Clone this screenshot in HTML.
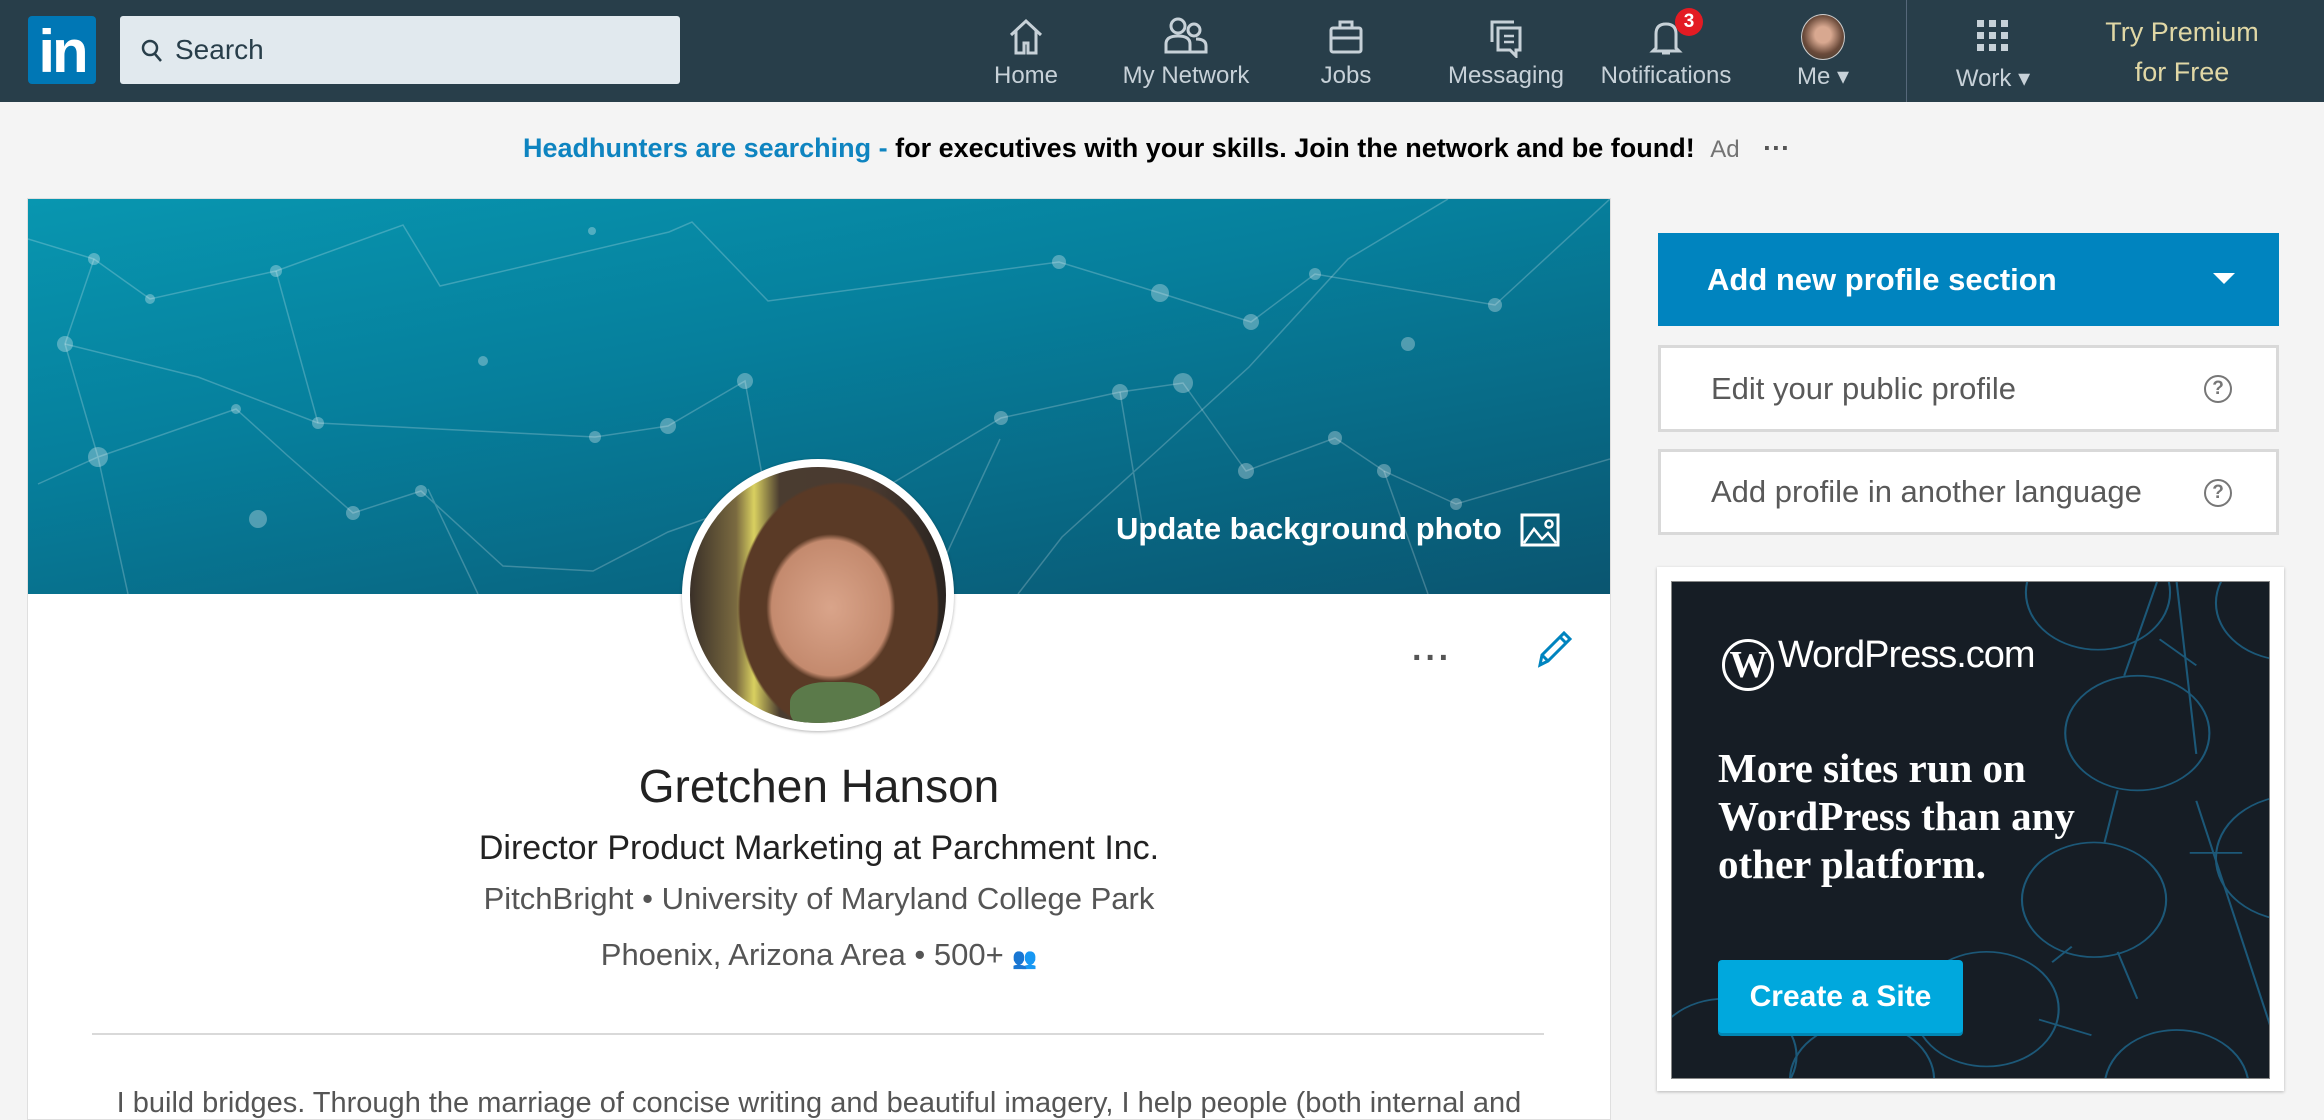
<!DOCTYPE html>
<html><head><meta charset="utf-8"><style>
*{margin:0;padding:0;box-sizing:border-box}
body{width:2324px;height:1104px;overflow:hidden;background:#f4f4f4;font-family:"Liberation Sans",sans-serif;position:relative}
.nav{position:absolute;left:0;top:0;width:2324px;height:102px;background:#283e4a}
.logo{position:absolute;left:28px;top:16px;width:68px;height:68px;background:#0077b5;border-radius:4px;color:#fff;font-weight:bold;font-size:60px;line-height:72px;text-align:center;letter-spacing:-3px}
.search{position:absolute;left:120px;top:16px;width:560px;height:68px;background:#e1e9ee;border-radius:3px;color:#283e4a;font-size:28px;line-height:68px;padding-left:55px}
.item{position:absolute;top:0;height:102px;color:#c7d1d8;font-size:24px;text-align:center;transform:translateX(-50%);white-space:nowrap}
.item svg{position:absolute;left:50%;top:16px;transform:translateX(-50%)}
.item span{position:absolute;left:50%;top:62px;transform:translateX(-50%)}
.abs{position:absolute}
.card{position:absolute;left:28px;top:199px;width:1582px;height:920px;background:#fff;box-shadow:0 0 0 1px #dfdfdf}
.ban{position:absolute;left:0;top:0;width:1582px;height:395px;background:linear-gradient(170deg,#0896b0 0%,#067f9c 40%,#0a5570 100%);overflow:hidden}
.c{position:absolute;left:0;width:1582px;text-align:center}
.rbox{position:absolute;left:1658px;width:621px;background:#fff;border:3px solid #d9d9d9;color:#595959;font-size:31px;padding-left:50px}
</style></head><body>
<div class="nav">
 <div class="logo">in</div>
 <div class="search"><svg class="abs" style="left:20px;top:22px" width="24" height="26" viewBox="0 0 24 26"><circle cx="10" cy="10" r="7" fill="none" stroke="#283e4a" stroke-width="2.5"/><path d="M15 16l6 7" stroke="#283e4a" stroke-width="2.5"/></svg>Search</div>
 <div class="item" style="left:1026px;width:100px"><svg width="40" height="42" viewBox="0 0 40 42"><path d="M5 19L20 5l15 14M10 15v22h8V27h4v10h8V15" fill="none" stroke="#c7d1d8" stroke-width="3"/></svg><span>Home</span></div>
 <div class="item" style="left:1186px;width:140px"><svg width="46" height="40" viewBox="0 0 46 40"><circle cx="15" cy="10" r="7" fill="none" stroke="#c7d1d8" stroke-width="3"/><circle cx="31" cy="14" r="6" fill="none" stroke="#c7d1d8" stroke-width="3"/><path d="M3 36v-8q0-8 12-8 12 0 12 8v8zM27 36h16v-6q0-7-10-7" fill="none" stroke="#c7d1d8" stroke-width="3"/></svg><span>My Network</span></div>
 <div class="item" style="left:1346px;width:80px"><svg width="40" height="40" viewBox="0 0 40 40"><rect x="5" y="12" width="30" height="24" rx="2" fill="none" stroke="#c7d1d8" stroke-width="3"/><path d="M14 12V6h12v6M5 22h30" fill="none" stroke="#c7d1d8" stroke-width="3"/></svg><span>Jobs</span></div>
 <div class="item" style="left:1506px;width:120px"><svg width="40" height="42" viewBox="0 0 40 42"><path d="M6 26V6h22" fill="none" stroke="#c7d1d8" stroke-width="3"/><path d="M12 12h22v22h-4v6l-6-6H12z" fill="none" stroke="#c7d1d8" stroke-width="3"/><path d="M18 20h10M18 26h10" stroke="#c7d1d8" stroke-width="2.5"/></svg><span>Messaging</span></div>
 <div class="item" style="left:1666px;width:150px"><svg width="40" height="42" viewBox="0 0 40 42"><path d="M10 32V18q0-10 10-10t10 10v14l3 3H7zM16 37h8" fill="none" stroke="#c7d1d8" stroke-width="3"/></svg><div class="abs" style="left:84px;top:8px;width:28px;height:28px;border-radius:50%;background:#e31b23;color:#fff;font-weight:bold;font-size:19px;line-height:28px">3</div><span>Notifications</span></div>
 <div class="item" style="left:1823px;width:80px"><div class="abs" style="left:18px;top:14px;width:44px;height:46px;border-radius:50%;background:radial-gradient(circle at 50% 45%,#d8a890 25%,#6a4a3a 60%,#3a3a30);border:1px solid #ccc"></div><span>Me ▾</span></div>
 <div class="abs" style="left:1906px;top:0;width:1px;height:102px;background:#56687a"></div>
 <div class="item" style="left:1993px;width:90px"><svg width="36" height="38" viewBox="0 0 36 38"><g fill="#c7d1d8"><rect x="2" y="4" width="7" height="7"/><rect x="14" y="4" width="7" height="7"/><rect x="26" y="4" width="7" height="7"/><rect x="2" y="16" width="7" height="7"/><rect x="14" y="16" width="7" height="7"/><rect x="26" y="16" width="7" height="7"/><rect x="2" y="28" width="7" height="7"/><rect x="14" y="28" width="7" height="7"/><rect x="26" y="28" width="7" height="7"/></g></svg><span style="top:64px">Work ▾</span></div>
 <div class="abs" style="left:2182px;top:12px;transform:translateX(-50%);color:#e0d7a5;font-size:27px;line-height:40px;text-align:center;white-space:nowrap">Try Premium<br>for Free</div>
</div>
<div class="abs" style="left:523px;top:133px;font-size:27px;font-weight:bold;white-space:nowrap;color:#000"><span style="color:#0e84c0">Headhunters are searching -</span> for executives with your skills. Join the network and be found! <span style="font-weight:normal;color:#737373;font-size:24px;margin-left:8px">Ad</span> <span style="font-weight:bold;color:#555;margin-left:16px">···</span></div>

<div class="card">
 <div class="ban"><svg width="1582" height="395" style="position:absolute;left:0;top:0"><g stroke="rgba(255,255,255,0.22)" stroke-width="1.5" fill="none">
 <path d="M0 40L66 60L122 100L248 72L375 26L412 87L641 33L664 23L740 102L1031 63L1132 94L1223 123L1287 75L1467 106L1582 0"/>
 <path d="M37 145L170 178L290 224L567 238L640 227L717 182L742 320L813 315L973 219L1092 193L1155 184L1218 272L1307 239L1356 272L1428 305L1582 260"/>
 <path d="M10 285L70 258L208 210L260 257L325 314L393 292L475 367L565 372L640 333L688 316L730 381M1420 0L1320 60L1221 168L1120 260L1034 338L990 395M1092 193L1115 330M1356 272L1400 395M66 60L37 145L70 258L100 395M972 240L900 395M400 290L450 395M248 72L290 224"/></g>
 <g fill="rgba(255,255,255,0.3)"><circle cx="66" cy="60" r="6"/><circle cx="37" cy="145" r="8"/><circle cx="122" cy="100" r="5"/><circle cx="248" cy="72" r="6"/><circle cx="290" cy="224" r="6"/><circle cx="70" cy="258" r="10"/><circle cx="208" cy="210" r="5"/><circle cx="567" cy="238" r="6"/><circle cx="640" cy="227" r="8"/><circle cx="717" cy="182" r="8"/><circle cx="742" cy="320" r="7"/><circle cx="813" cy="315" r="5"/><circle cx="973" cy="219" r="7"/><circle cx="1092" cy="193" r="8"/><circle cx="1155" cy="184" r="10"/><circle cx="1218" cy="272" r="8"/><circle cx="1307" cy="239" r="7"/><circle cx="1356" cy="272" r="7"/><circle cx="1428" cy="305" r="6"/><circle cx="1031" cy="63" r="7"/><circle cx="1132" cy="94" r="9"/><circle cx="1223" cy="123" r="8"/><circle cx="1287" cy="75" r="6"/><circle cx="1467" cy="106" r="7"/><circle cx="564" cy="32" r="4"/><circle cx="393" cy="292" r="6"/><circle cx="325" cy="314" r="7"/><circle cx="230" cy="320" r="9"/><circle cx="455" cy="162" r="5"/><circle cx="1380" cy="145" r="7"/></g></svg>
  <div class="abs" style="left:1088px;top:312px;color:#fff;font-weight:bold;font-size:31px;white-space:nowrap">Update background photo</div>
  <svg class="abs" style="left:1492px;top:314px" width="40" height="34" viewBox="0 0 40 34"><rect x="2" y="2" width="36" height="30" fill="none" stroke="#fff" stroke-width="3"/><path d="M4 30l10-14 8 10 6-6 8 10" fill="none" stroke="#fff" stroke-width="2.5"/><circle cx="29" cy="11" r="3.5" fill="none" stroke="#fff" stroke-width="2.5"/></svg>
 </div>
 <div class="abs" style="left:654px;top:260px;width:272px;height:272px;border-radius:50%;background:#fff;box-shadow:0 1px 3px rgba(0,0,0,.3)"></div>
 <div class="abs" style="left:662px;top:268px;width:256px;height:256px;border-radius:50%;overflow:hidden;background:radial-gradient(ellipse 42% 48% at 55% 55%,#d9a48a 0%,#c48a6e 55%,transparent 60%),radial-gradient(ellipse 48% 60% at 58% 55%,#5a3a26 0%,#5a3a26 80%,transparent 82%),linear-gradient(90deg,#3a3028 0%,#7a6a40 18%,#d9d060 25%,#4a3c30 35%,#4a3a30 70%,#2a2420 100%)"><div class="abs" style="left:100px;top:215px;width:90px;height:50px;background:#5b7a4a;border-radius:40%"></div></div>
 <div class="abs" style="left:1384px;top:440px;font-size:34px;font-weight:bold;color:#555;letter-spacing:2px">···</div>
 <svg class="abs" style="left:1506px;top:430px" width="40" height="40" viewBox="0 0 40 40"><path d="M6 36l2-10L30 4l6 6-22 22zM8 26l6 6M26 8l6 6" fill="none" stroke="#0084bf" stroke-width="3"/></svg>
 <div class="c" style="top:560px;font-size:46px;color:#222">Gretchen Hanson</div>
 <div class="c" style="top:630px;font-size:34px;color:#222">Director Product Marketing at Parchment Inc.</div>
 <div class="c" style="top:682px;font-size:31px;color:#555">PitchBright • University of Maryland College Park</div>
 <div class="c" style="top:738px;font-size:31px;color:#555">Phoenix, Arizona Area • 500+ <span style="font-size:20px">👥</span></div>
 <div class="abs" style="left:64px;top:834px;width:1452px;height:2px;background:#d9d9d9"></div>
 <div class="c" style="top:888px;font-size:29px;color:#555">I build bridges. Through the marriage of concise writing and beautiful imagery, I help people (both internal and</div>
</div>

<div class="abs" style="left:1658px;top:233px;width:621px;height:93px;background:#0084bf;color:#fff;font-weight:bold;font-size:31px;line-height:93px;padding-left:49px">Add new profile section<div class="abs" style="right:44px;top:40px;width:0;height:0;border-left:11px solid transparent;border-right:11px solid transparent;border-top:11px solid #fff"></div></div>
<div class="rbox" style="top:345px;height:87px;line-height:81px">Edit your public profile<div class="abs" style="right:44px;top:27px;width:28px;height:28px;border:2.5px solid #777;border-radius:50%;font-size:19px;line-height:23px;text-align:center;font-weight:bold;color:#777">?</div></div>
<div class="rbox" style="top:449px;height:86px;line-height:80px">Add profile in another language<div class="abs" style="right:44px;top:27px;width:28px;height:28px;border:2.5px solid #777;border-radius:50%;font-size:19px;line-height:23px;text-align:center;font-weight:bold;color:#777">?</div></div>

<div class="abs" style="left:1657px;top:567px;width:627px;height:524px;background:#fff;box-shadow:0 1px 3px rgba(0,0,0,.25)"></div>
<div class="abs" style="left:1671px;top:581px;width:599px;height:498px;background:#161d25;overflow:hidden;border:1px solid #888">
 <svg width="599" height="498" viewBox="0 0 457 478" preserveAspectRatio="none" style="position:absolute;left:0;top:0"><g fill="none" stroke="#1c5878" stroke-width="1.6"><circle cx="325" cy="10" r="55"/><circle cx="355" cy="145" r="55"/><circle cx="322" cy="305" r="55"/><circle cx="240" cy="410" r="55"/><circle cx="385" cy="485" r="55"/><circle cx="475" cy="265" r="60"/><circle cx="470" cy="20" r="55"/><circle cx="40" cy="455" r="55"/><circle cx="145" cy="478" r="55"/><path d="M370 0L345 90M385 0L400 165M340 200L330 250M400 210L470 478M372 55L400 80M305 350L290 365M340 355L355 400M395 260L435 260M280 420L320 435"/></g></svg>
 <div class="abs" style="left:50px;top:52px;color:#fff;font-size:38px;white-space:nowrap;letter-spacing:-1px"><span style="display:inline-block;width:52px;height:52px;border:3px solid #fff;border-radius:50%;font-family:'Liberation Serif',serif;font-size:38px;line-height:46px;text-align:center;font-weight:bold;vertical-align:-10px;margin-right:4px">W</span>WordPress.com</div>
 <div class="abs" style="left:46px;top:162px;color:#fff;font-family:'Liberation Serif',serif;font-weight:bold;font-size:41px;line-height:48px;white-space:nowrap">More sites run on<br>WordPress than any<br>other platform.</div>
 <div class="abs" style="left:46px;top:378px;width:245px;height:73px;background:#00a8dd;border-radius:4px;color:#fff;font-weight:bold;font-size:30px;line-height:73px;text-align:center;box-shadow:0 3px 0 #0087b5">Create a Site</div>
</div>
</body></html>
